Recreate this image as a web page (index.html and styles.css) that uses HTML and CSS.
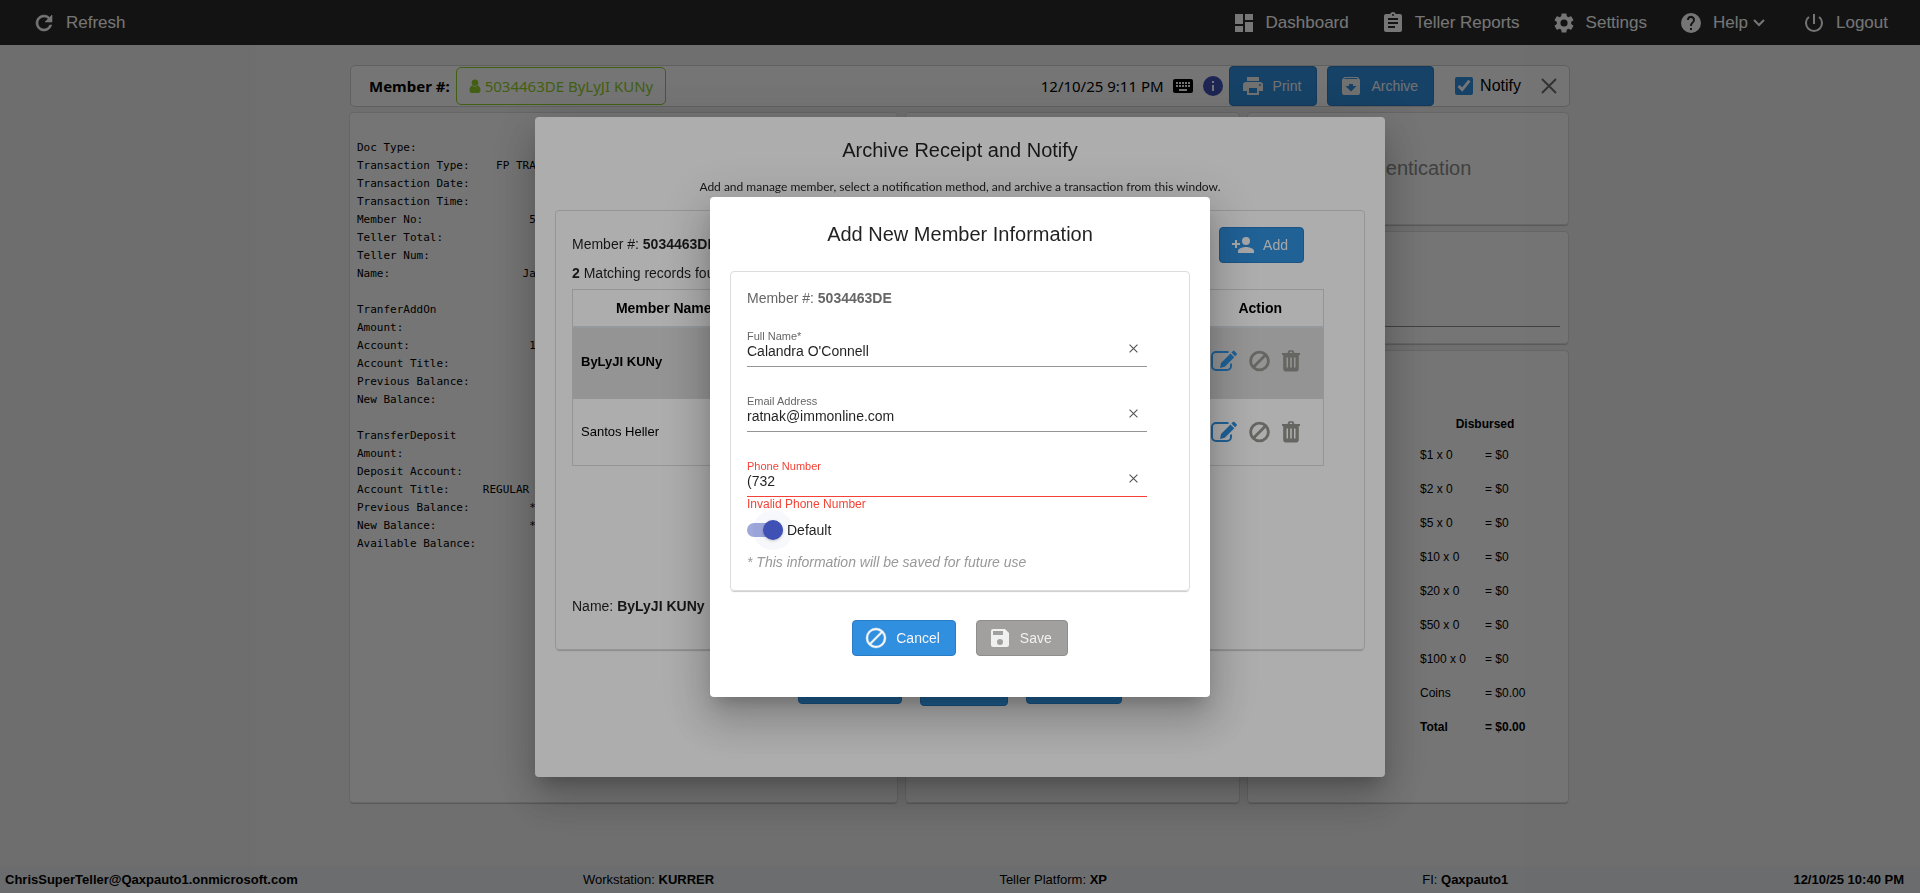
FILE: index.html
```html
<!DOCTYPE html>
<html lang="en">
<head>
    <meta charset="UTF-8">
    <meta name="viewport" content="width=device-width, initial-scale=1.0">
    <title>Archive Receipt</title>
    <link rel="stylesheet" href="styles.css">
</head>
<body>
    <!-- icon sprite -->
    <svg class="sprite" aria-hidden="true">
        <symbol id="i-refresh" viewBox="0 0 24 24"><path d="M17.65 6.35A7.96 7.96 0 0 0 12 4a8 8 0 1 0 7.73 10h-2.08A6 6 0 1 1 12 6c1.66 0 3.14.69 4.22 1.78L13 11h7V4z" stroke="currentColor" stroke-width=".6"/></symbol>
        <symbol id="i-dashboard" viewBox="0 0 24 24"><path d="M3 13h8V3H3zm0 8h8v-6H3zm10 0h8V11h-8zm0-18v6h8V3z"/></symbol>
        <symbol id="i-report" viewBox="0 0 24 24"><path d="M19 3h-4.18C14.4 1.84 13.3 1 12 1s-2.4.84-2.82 2H5a2 2 0 0 0-2 2v14a2 2 0 0 0 2 2h14a2 2 0 0 0 2-2V5a2 2 0 0 0-2-2zm-7 0a1 1 0 1 1 0 2 1 1 0 0 1 0-2zm2 14H7v-2h7zm3-4H7v-2h10zm0-4H7V7h10z"/></symbol>
        <symbol id="i-settings" viewBox="0 0 24 24"><path d="M19.14 12.94c.04-.3.06-.61.06-.94s-.02-.64-.07-.94l2.03-1.58a.49.49 0 0 0 .12-.61l-1.92-3.32a.49.49 0 0 0-.59-.22l-2.39.96a7 7 0 0 0-1.62-.94l-.36-2.54a.48.48 0 0 0-.48-.41h-3.84a.47.47 0 0 0-.47.41l-.36 2.54c-.59.24-1.13.57-1.62.94l-2.39-.96a.48.48 0 0 0-.59.22L2.74 8.87a.47.47 0 0 0 .12.61l2.03 1.58a6 6 0 0 0-.02 1.88l-2.03 1.58a.49.49 0 0 0-.12.61l1.92 3.32c.12.22.37.29.59.22l2.39-.96c.5.38 1.03.7 1.62.94l.36 2.54c.05.24.24.41.48.41h3.84c.24 0 .44-.17.47-.41l.36-2.54a7 7 0 0 0 1.62-.94l2.39.96c.22.08.47 0 .59-.22l1.92-3.32a.47.47 0 0 0-.12-.61zM12 15.6a3.6 3.6 0 1 1 0-7.2 3.6 3.6 0 0 1 0 7.2z"/></symbol>
        <symbol id="i-help" viewBox="0 0 24 24"><path d="M12 2a10 10 0 1 0 0 20 10 10 0 0 0 0-20zm1 17h-2v-2h2zm2.07-7.75-.9.92C13.45 12.9 13 13.5 13 15h-2v-.5c0-1.1.45-2.1 1.17-2.83l1.24-1.26A2 2 0 1 0 10 9H8a4 4 0 1 1 7.07 2.25z"/></symbol>
        <symbol id="i-power" viewBox="0 0 24 24"><path d="M13 3h-2v10h2zm4.83 2.17-1.42 1.42A7 7 0 1 1 7.58 6.58L6.17 5.17a9 9 0 1 0 11.66 0z"/></symbol>
        <symbol id="i-user" viewBox="0 0 12 14"><path d="M6 7a3.3 3.3 0 1 0 0-6.6A3.3 3.3 0 0 0 6 7zm2.6-.5a3.9 3.9 0 0 1-5.2 0C1.400 7 .5 8.900.5 11.300.5 12.900 1.400 14 2.800 14h6.400c1.400 0 2.300-1.100 2.300-2.700 0-2.400-.9-4.300-2.900-4.800z"/></symbol>
        <symbol id="i-keyboard" viewBox="0 0 24 24"><path d="M20 5H4a2 2 0 0 0-2 2v10c0 1.100.9 2 2 2h16a2 2 0 0 0 2-2V7a2 2 0 0 0-2-2zm-9 3h2v2h-2zm0 3h2v2h-2zM8 8h2v2H8zm0 3h2v2H8zm-1 2H5v-2h2zm0-3H5V8h2zm9 7H8v-2h8zm0-4h-2v-2h2zm0-3h-2V8h2zm3 3h-2v-2h2zm0-3h-2V8h2z"/></symbol>
        <symbol id="i-info" viewBox="0 0 24 24"><path d="M12 2a10 10 0 1 0 0 20 10 10 0 0 0 0-20zm1 15h-2v-6h2zm0-8h-2V7h2z"/></symbol>
        <symbol id="i-print" viewBox="0 0 24 24"><path d="M19 8H5a3 3 0 0 0-3 3v6h4v4h12v-4h4v-6a3 3 0 0 0-3-3zm-3 11H8v-5h8zm3-7a1 1 0 1 1 0-2 1 1 0 0 1 0 2zm-1-9H6v4h12z"/></symbol>
        <symbol id="i-archive" viewBox="0 0 24 24"><path d="m20.540 5.230-1.390-1.680A1.450 1.450 0 0 0 18 3H6c-.47 0-.88.21-1.160.55L3.460 5.230C3.170 5.570 3 6.020 3 6.500V19a2 2 0 0 0 2 2h14a2 2 0 0 0 2-2V6.500c0-.48-.17-.93-.46-1.270zM12 17.500 6.500 12H10v-2h4v2h3.500zM5.120 5l.81-1h12l.94 1z"/></symbol>
        <symbol id="i-close" viewBox="0 0 16 16"><path d="m1 1 14 14M15 1 1 15" fill="none" stroke="currentColor" stroke-width="2"/></symbol>
        <symbol id="i-add" viewBox="0 0 24 24"><path d="M15 12a4 4 0 1 0 0-8 4 4 0 0 0 0 8zm-9-2V7H4v3H1v2h3v3h2v-3h3v-2zm9 4c-2.670 0-8 1.340-8 4v2h16v-2c0-2.660-5.330-4-8-4z"/></symbol>
        <symbol id="i-block" viewBox="0 0 24 24"><path d="M12 2a10 10 0 1 0 0 20 10 10 0 0 0 0-20zM4 12a8 8 0 0 1 12.900-6.310L5.690 16.900A7.900 7.900 0 0 1 4 12zm8 8a7.900 7.900 0 0 1-4.900-1.690L18.310 7.100A8 8 0 0 1 12 20z" stroke="currentColor" stroke-width=".4"/></symbol>
        <symbol id="i-save" viewBox="0 0 24 24"><path d="M17 3H5a2 2 0 0 0-2 2v14c0 1.100.9 2 2 2h14a2 2 0 0 0 2-2V7zm-5 16a3 3 0 1 1 0-6 3 3 0 0 1 0 6zm3-10H5V5h10z"/></symbol>
        <symbol id="i-ban" viewBox="0 0 22 22"><circle cx="11" cy="11" r="9.300" fill="none" stroke="currentColor" stroke-width="3"/><path d="M17 5 5 17" stroke="currentColor" stroke-width="3"/></symbol>
        <symbol id="i-edit" viewBox="0 0 26 22"><path d="M17.500 2H5a4 4 0 0 0-4 4v10a4 4 0 0 0 4 4h11a4 4 0 0 0 4-4v-2.500" fill="none" stroke="currentColor" stroke-width="2"/><path d="m10 13 9.500-9.500 3.800 3.800-9.500 9.500L9 18z"/><path d="m20.400 2.600 1.300-1.300c.6-.6 1.400-.6 2 0l1.700 1.700c.6.6.6 1.400 0 2l-1.300 1.300z"/></symbol>
        <symbol id="i-trash" viewBox="0 0 18 22"><path fill-rule="evenodd" d="M5.500 3 6.500.8C6.700.3 7 .2 7.500.2h3c.5 0 .8.1 1 .6l1 2.200H18v2h-1.200v13.500c0 1.800-1 3-2.300 3h-11c-1.300 0-2.300-1.200-2.300-3V5H0V3zm2 0h3l-.5-1.300H8zM4.500 7.500v10H6v-10zm3.700 0v10h1.600v-10zm3.800 0v10h1.500v-10z"/></symbol>
    </svg>

    <header class="topbar">
        <a class="nav-item" href="#"><svg class="icon"><use href="#i-refresh"/></svg>Refresh</a>
        <nav class="nav">
            <a class="nav-item" href="#"><svg class="icon"><use href="#i-dashboard"/></svg>Dashboard</a>
            <a class="nav-item" href="#"><svg class="icon"><use href="#i-report"/></svg>Teller Reports</a>
            <a class="nav-item" href="#"><svg class="icon"><use href="#i-settings"/></svg>Settings</a>
            <a class="nav-item" href="#"><svg class="icon"><use href="#i-help"/></svg>Help
                <svg class="chevron" viewBox="0 0 12 8"><path d="m1 1 5 5 5-5" fill="none" stroke="currentColor" stroke-width="2"/></svg></a>
            <a class="nav-item" href="#"><svg class="icon"><use href="#i-power"/></svg>Logout</a>
        </nav>
    </header>

    <main class="page">
        <div class="toolbar">
            <span class="toolbar-label">Member #:</span>
            <span class="member-chip"><svg class="chip-icon"><use href="#i-user"/></svg>5034463DE ByLyJI KUNy</span>
            <div class="toolbar-right">
                <span class="toolbar-time">12/10/25 9:11 PM</span>
                <svg class="icon keyboard"><use href="#i-keyboard"/></svg>
                <svg class="icon info"><use href="#i-info"/></svg>
                <button class="btn btn-tall btn-print"><svg class="icon"><use href="#i-print"/></svg>Print</button>
                <button class="btn btn-tall"><svg class="icon"><use href="#i-archive"/></svg>Archive</button>
                <label class="notify"><input type="checkbox" checked>Notify</label>
                <button class="close" aria-label="Close"><svg><use href="#i-close"/></svg></button>
            </div>
        </div>

        <div class="columns">
            <section class="card">
<pre class="receipt">
Doc Type:
Transaction Type:    FP TRANSFER
Transaction Date:
Transaction Time:
Member No:                5034463
Teller Total:
Teller Num:
Name:                    James

TranferAddOn
Amount:
Account:                  1
Account Title:
Previous Balance:
New Balance:

TransferDeposit
Amount:
Deposit Account:
Account Title:     REGULAR SAVINGS
Previous Balance:         *****
New Balance:              *****
Available Balance:
</pre>
            </section>
            <section class="card"></section>
            <div class="side">
                <section class="card auth">Authentication</section>
                <section class="card note"><input type="text" aria-label="Note"></section>
                <section class="card cash">
                    <table class="cash-table">
                        <thead>
                            <tr><th colspan="2">Disbursed</th></tr>
                        </thead>
                        <tbody>
                            <tr><td>$1 x 0</td><td>= $0</td></tr>
                            <tr><td>$2 x 0</td><td>= $0</td></tr>
                            <tr><td>$5 x 0</td><td>= $0</td></tr>
                            <tr><td>$10 x 0</td><td>= $0</td></tr>
                            <tr><td>$20 x 0</td><td>= $0</td></tr>
                            <tr><td>$50 x 0</td><td>= $0</td></tr>
                            <tr><td>$100 x 0</td><td>= $0</td></tr>
                            <tr><td>Coins</td><td>= $0.00</td></tr>
                            <tr class="total"><td>Total</td><td>= $0.00</td></tr>
                        </tbody>
                    </table>
                </section>
            </div>
        </div>
    </main>

    <footer class="statusbar">
        <b>ChrisSuperTeller@Qaxpauto1.onmicrosoft.com</b>
        <span>Workstation: <b>KURRER</b></span>
        <span class="platform">Teller Platform: <b>XP</b></span>
        <span>FI: <b>Qaxpauto1</b></span>
        <b>12/10/25 10:40 PM</b>
    </footer>

    <!-- archive dialog -->
    <div class="backdrop">
        <div class="dialog dialog-archive" role="dialog" aria-labelledby="archive-title">
            <h2 class="dialog-title" id="archive-title">Archive Receipt and Notify</h2>
            <p class="dialog-text">Add and manage member, select a notification method, and archive a transaction from this window.</p>
            <div class="panel panel-archive">
                <div class="panel-head">
                    <div>
                        <p class="line">Member #: <b>5034463DE</b></p>
                        <p class="line"><b>2</b> Matching records found</p>
                    </div>
                    <button class="btn btn-add"><svg class="icon"><use href="#i-add"/></svg>Add</button>
                </div>
                <table class="members">
                    <thead>
                        <tr><th class="col-name">Member Name</th><th>Email</th><th>Phone</th><th class="col-action">Action</th></tr>
                    </thead>
                    <tbody>
                        <tr class="selected">
                            <td>ByLyJI KUNy</td><td></td><td></td>
                            <td><div class="actions">
                                <button class="edit" aria-label="Edit"><svg><use href="#i-edit"/></svg></button>
                                <button class="ban" aria-label="Disable"><svg><use href="#i-ban"/></svg></button>
                                <button class="trash" aria-label="Delete"><svg><use href="#i-trash"/></svg></button>
                            </div></td>
                        </tr>
                        <tr>
                            <td>Santos Heller</td><td></td><td></td>
                            <td><div class="actions">
                                <button class="edit" aria-label="Edit"><svg><use href="#i-edit"/></svg></button>
                                <button class="ban" aria-label="Disable"><svg><use href="#i-ban"/></svg></button>
                                <button class="trash" aria-label="Delete"><svg><use href="#i-trash"/></svg></button>
                            </div></td>
                        </tr>
                    </tbody>
                </table>
                <p class="line panel-name">Name: <b>ByLyJI KUNy</b></p>
            </div>
            <div class="dialog-buttons archive-buttons">
                <button class="btn"><svg class="icon"><use href="#i-block"/></svg>Cancel</button>
                <button class="btn btn-tall"><svg class="icon"><use href="#i-print"/></svg>Print</button>
                <button class="btn"><svg class="icon"><use href="#i-save"/></svg>Notify</button>
            </div>
        </div>
    </div>

    <!-- new member dialog -->
    <div class="backdrop">
        <div class="dialog dialog-member" role="dialog" aria-labelledby="member-title">
            <h2 class="dialog-title" id="member-title">Add New Member Information</h2>
            <form class="panel panel-member" id="member-form">
                <p class="line muted">Member #: <b>5034463DE</b></p>
                <div class="field">
                    <label for="full-name">Full Name*</label>
                    <div class="field-row">
                        <input id="full-name" type="text" value="Calandra O'Connell">
                        <button type="button" class="clear" aria-label="Clear name"><svg><use href="#i-close"/></svg></button>
                    </div>
                </div>
                <div class="field">
                    <label for="email">Email Address</label>
                    <div class="field-row">
                        <input id="email" type="text" value="ratnak@immonline.com">
                        <button type="button" class="clear" aria-label="Clear email"><svg><use href="#i-close"/></svg></button>
                    </div>
                </div>
                <div class="field invalid">
                    <label for="phone">Phone Number</label>
                    <div class="field-row">
                        <input id="phone" type="text" value="(732">
                        <button type="button" class="clear" aria-label="Clear phone"><svg><use href="#i-close"/></svg></button>
                    </div>
                    <p class="error">Invalid Phone Number</p>
                </div>
                <label class="toggle"><input type="checkbox" role="switch" checked>Default</label>
                <p class="hint">* This information will be saved for future use</p>
            </form>
            <div class="dialog-buttons">
                <button class="btn"><svg class="icon"><use href="#i-block"/></svg>Cancel</button>
                <button class="btn" form="member-form" disabled><svg class="icon"><use href="#i-save"/></svg>Save</button>
            </div>
        </div>
    </div>
</body>
</html>
```

FILE: styles.css
```css
* {
    box-sizing: border-box;
}
body {
    display: flex;
    flex-direction: column;
    min-height: 100vh;
    margin: 0;
    font-family: "Liberation Sans", Arial, sans-serif;
    font-size: 14px;
    background-color: #f0f0f0;
}
p, h2, pre {
    margin: 0;
}
button, input {
    font: inherit;
}
button {
    cursor: pointer;
}
svg {
    display: block;
    fill: currentColor;
}
.sprite {
    position: absolute;
    width: 0;
    height: 0;
}
.icon {
    width: 24px;
    height: 24px;
    flex: none;
}

/* Top bar */
.topbar {
    display: flex;
    justify-content: space-between;
    align-items: center;
    height: 45px;
    padding: 0 32px;
    background-color: #2b2b2b;
    color: #fff;
    font-size: 17px;
}
.nav {
    display: flex;
    gap: 32px;
}
.nav-item {
    display: flex;
    align-items: center;
    gap: 10px;
    color: inherit;
    text-decoration: none;
}
.chevron {
    width: 12px;
    height: 8px;
    margin: 0 5px 0 -5px;
}

/* Page */
.page {
    flex: 1;
    width: 100%;
    max-width: 1220px;
    margin: 0 auto;
    padding-top: 20px;
}
.toolbar {
    display: flex;
    align-items: center;
    height: 42px;
    padding-left: 18px;
    margin-bottom: 5px;
    border: 1px solid #d0d0d0;
    border-radius: 5px;
    background-color: #fdfdfd;
    font-family: "Noto Sans", "Open Sans", sans-serif;
    font-size: 15px;
}
.toolbar-label {
    font-weight: bold;
}
.member-chip {
    display: flex;
    align-items: center;
    gap: 4px;
    height: 38px;
    margin-left: 6px;
    padding: 0 12px;
    border: 1px solid #8fce2a;
    border-radius: 5px;
    color: #8fce2a;
}
.chip-icon {
    width: 12px;
    height: 14px;
}
.toolbar-right {
    display: flex;
    align-items: center;
    margin-left: auto;
    padding-right: 12px;
}
.toolbar-time {
    margin-right: 7px;
}
.keyboard {
    margin-right: 6px;
}
.info {
    margin-right: 4px;
    color: #3f51b5;
}
.notify {
    display: flex;
    align-items: center;
    gap: 7px;
    margin: 0 20px 0 21px;
    font-family: "Liberation Sans", Arial, sans-serif;
    font-size: 16px;
}
.notify input {
    width: 18px;
    height: 18px;
    margin: 0;
    accent-color: #308fde;
}
.close {
    padding: 0;
    border: 0;
    background: none;
    color: #6e6e6e;
}
.close svg {
    width: 16px;
    height: 16px;
}

/* Buttons */
.btn {
    display: flex;
    align-items: center;
    gap: 8px;
    height: 36px;
    padding: 0 15px 0 11px;
    border: 1px solid #2a7cc4;
    border-radius: 4px;
    background-color: #308fde;
    color: #f5f5f5;
    font-family: "Liberation Sans", Arial, sans-serif;
    font-size: 14px;
}
.btn:disabled {
    border-color: #8e8e8e;
    background-color: #a1a09f;
    color: #f0f0f0;
    cursor: default;
}
.btn-tall {
    height: 40px;
}
.btn-print {
    margin-right: 10px;
}

/* Cards */
.columns {
    display: grid;
    grid-template-columns: 549fr 335fr 322fr;
    gap: 7px;
    min-height: 691px;
    margin: 0 1px 0 -1px;
}
.card,
.panel {
    border: 1px solid #dcdcdc;
    border-radius: 4px;
    background-color: #fdfdfd;
    box-shadow: 0 2px 1px -1px rgba(0, 0, 0, 0.2);
}
.receipt {
    padding: 26px 7px;
    font-family: "DejaVu Sans Mono", monospace;
    font-size: 11px;
    line-height: 18px;
}
.side {
    display: grid;
    grid-template-rows: 113px 113px 1fr;
    gap: 6px;
}
.auth {
    display: flex;
    justify-content: center;
    align-items: center;
    font-size: 20px;
    color: #8c8c8c;
}
.note {
    display: flex;
    align-items: flex-end;
    padding: 0 8px 16px;
}
.note input {
    width: 100%;
    border: 0;
    border-bottom: 1px solid #8c8c8c;
    background: none;
}
.cash {
    padding: 59px 18px 0 0;
}
.cash-table {
    width: 130px;
    margin-left: auto;
    border-collapse: collapse;
    font-size: 12px;
}
.cash-table th {
    height: 28px;
    padding: 0;
}
.cash-table td {
    width: 66px;
    height: 34px;
    padding: 0;
}
.total {
    font-weight: bold;
}

/* Status bar */
.statusbar {
    display: flex;
    justify-content: space-between;
    align-items: center;
    height: 27px;
    padding: 0 16px 0 5px;
    background-color: #e9ecef;
    font-size: 13px;
}
.platform {
    margin-right: 30px;
}

/* Dialogs */
.backdrop {
    position: fixed;
    inset: 0;
    display: flex;
    justify-content: center;
    align-items: center;
    background-color: rgba(0, 0, 0, 0.32);
}
.dialog {
    padding: 20px;
    border-radius: 4px;
    background-color: #fff;
    color: rgba(0, 0, 0, 0.87);
    box-shadow: 0 11px 15px -7px rgba(0, 0, 0, 0.2),
        0 24px 38px 3px rgba(0, 0, 0, 0.14),
        0 9px 46px 8px rgba(0, 0, 0, 0.12);
}
.dialog-archive {
    width: 850px;
    min-height: 660px;
    padding-top: 16px;
}
.dialog-member {
    width: 500px;
    min-height: 500px;
}
.dialog-title {
    font-size: 20px;
    font-weight: normal;
    line-height: 34px;
    text-align: center;
}
.dialog-text {
    margin: 10px 0 13px;
    font-family: Lato, "Open Sans", sans-serif;
    font-size: 12px;
    line-height: 20px;
    text-align: center;
}
.line {
    line-height: 29px;
}
.panel {
    background-color: transparent;
    padding: 0 16px;
}
.panel-archive {
    min-height: 440px;
    padding-top: 19px;
}
.panel-head {
    display: flex;
    justify-content: space-between;
    align-items: flex-start;
    padding-right: 44px;
    margin-bottom: 1px;
}
.btn-add {
    margin-top: -3px;
}
.members {
    width: 752px;
    max-width: 100%;
    border: 1px solid #dcdcdc;
    border-collapse: collapse;
    color: #000;
    font-size: 13px;
}
.members th {
    height: 38px;
    padding: 0;
    border-bottom: 2px solid #dee2e6;
    font-size: 14px;
}
.members td {
    height: 67px;
    padding: 0 8px;
    border-bottom: 1px solid #dcdcdc;
}
.col-name {
    width: 182px;
}
.col-action {
    width: 126px;
}
.members .selected td {
    height: 71px;
    padding-bottom: 3px;
    background-color: #dadada;
    font-weight: bold;
}
.actions {
    display: flex;
    justify-content: center;
    align-items: center;
    gap: 12px;
    padding-right: 9px;
}
.actions button {
    padding: 0;
    border: 0;
    background: none;
    color: #95958f;
}
.actions svg {
    width: 21px;
    height: 22px;
}
.actions .edit {
    color: #308fde;
}
.actions .edit svg {
    width: 26px;
}
.actions .trash svg {
    width: 18px;
}
.panel-name {
    margin-top: 126px;
}
.panel-member {
    height: 320px;
    margin-top: 20px;
    padding-top: 12px;
}
.muted {
    color: #666;
}
.field {
    width: 400px;
    max-width: 100%;
    margin-bottom: 28px;
}
.field:nth-of-type(1) {
    margin-top: 17px;
}
.field label {
    display: block;
    font-size: 11px;
    line-height: 13px;
    color: #666;
}
.field-row {
    display: flex;
    align-items: flex-start;
    height: 24px;
    border-bottom: 1px solid #949494;
}
.field input {
    flex: 1;
    min-width: 0;
    height: 16px;
    padding: 0;
    border: 0;
    outline: 0;
    background: none;
    color: inherit;
}
.clear {
    padding: 1px 0 0;
    margin-right: 9px;
    border: 0;
    background: none;
    color: #555;
}
.clear svg {
    width: 9px;
    height: 9px;
}
.invalid label,
.error {
    color: #f44336;
}
.field.invalid {
    margin-bottom: 0;
}
.invalid .field-row {
    border-color: #f44336;
}
.error {
    font-size: 12px;
    line-height: 15px;
}
.toggle {
    display: flex;
    align-items: center;
    gap: 4px;
    height: 36px;
}
.toggle input {
    appearance: none;
    display: flex;
    align-items: center;
    justify-content: flex-end;
    width: 36px;
    height: 14px;
    margin: 0;
    border-radius: 7px;
    background-color: #9fa8da;
}
.toggle input::before {
    content: "";
    width: 20px;
    height: 20px;
    border-radius: 50%;
    background-color: #3f51b5;
    box-shadow: 0 1px 3px rgba(0, 0, 0, 0.2), 0 0 0 10px rgba(63, 81, 181, 0.04);
}
.hint {
    line-height: 28px;
    font-style: italic;
    color: #999;
}
.dialog-buttons {
    display: flex;
    justify-content: center;
    align-items: center;
    gap: 20px;
    margin-top: 29px;
}
.archive-buttons {
    gap: 18px;
    margin-top: 16px;
}
```
